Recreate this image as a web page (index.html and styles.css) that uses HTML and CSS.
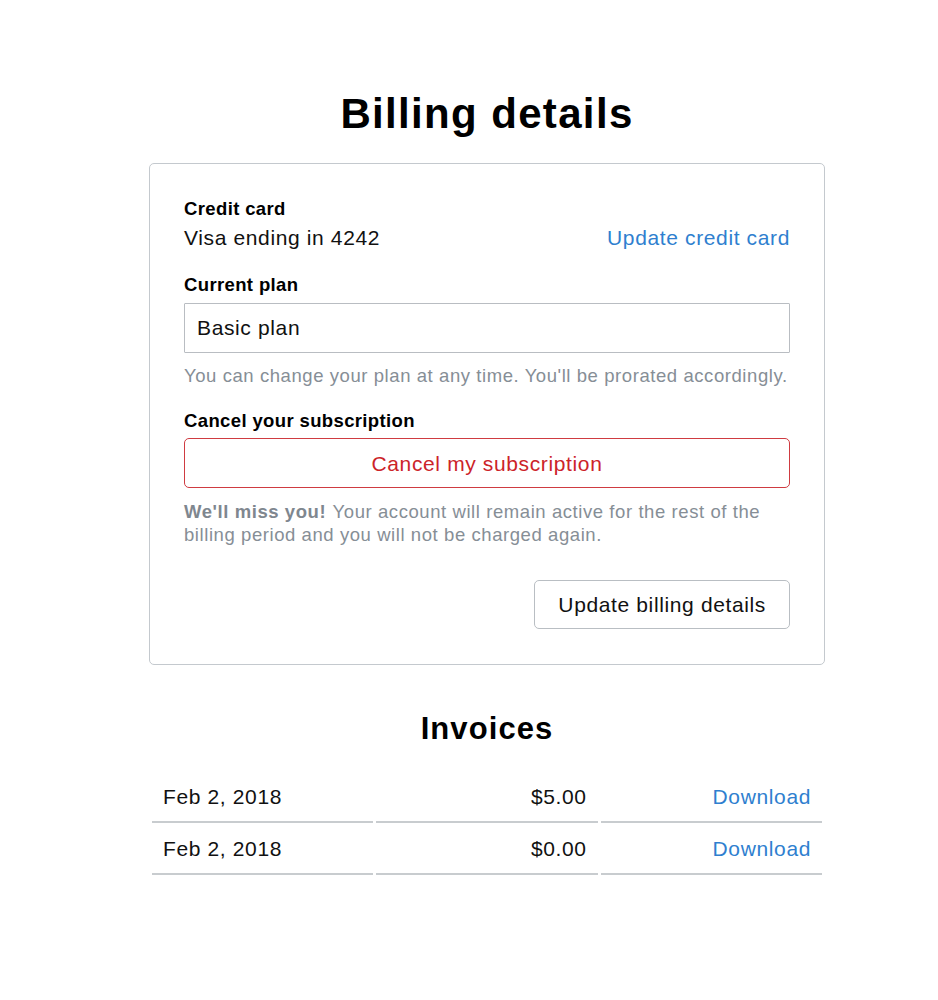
FILE: index.html
```html
<!DOCTYPE html>
<html lang="en">
<head>
<meta charset="utf-8">
<title>Billing details</title>
<link rel="stylesheet" href="styles.css">
</head>
<body>
<main class="page">
  <h1 class="title">Billing details</h1>
  <form class="card">
    <div class="card-row">
      <div>
        <div class="label">Credit card</div>
        <div class="value">Visa ending in 4242</div>
      </div>
      <a class="link" href="#">Update credit card</a>
    </div>

    <div class="field field-plan">
      <label class="label" for="plan">Current plan</label>
      <input class="control" id="plan" type="text" value="Basic plan" readonly>
      <p class="help">You can change your plan at any time. You'll be prorated accordingly.</p>
    </div>

    <div class="field field-cancel">
      <div class="label">Cancel your subscription</div>
      <button class="btn btn-danger" type="button">Cancel my subscription</button>
      <p class="help help-multi"><strong>We'll miss you!</strong> Your account will remain active for the rest of the billing period and you will not be charged again.</p>
    </div>

    <div class="actions">
      <button class="btn btn-default" type="button">Update billing details</button>
    </div>
  </form>

  <h2 class="subtitle">Invoices</h2>
  <table class="invoices">
    <tbody>
      <tr>
        <td>Feb 2, 2018</td>
        <td class="num">$5.00</td>
        <td class="num"><a class="link" href="#">Download</a></td>
      </tr>
      <tr>
        <td>Feb 2, 2018</td>
        <td class="num">$0.00</td>
        <td class="num"><a class="link" href="#">Download</a></td>
      </tr>
    </tbody>
  </table>
</main>
</body>
</html>
```
FILE: styles.css
```css
html, body {
  margin: 0;
  padding: 0;
  background: #ffffff;
}

body {
  font-family: "Liberation Sans", Arial, Helvetica, sans-serif;
  font-size: 21px;
  line-height: 31px;
  letter-spacing: 0.03em;
  color: #111111;
}

.page {
  width: 676px;
  margin-left: 149px;
  padding-top: 90px;
  padding-bottom: 40px;
}

.title {
  margin: 0 0 25px;
  font-size: 42px;
  line-height: 48px;
  font-weight: 700;
  letter-spacing: 0.032em;
  text-align: center;
  color: #000000;
}

.card {
  margin: 0;
  border: 1px solid #c4c9ce;
  border-radius: 5px;
  padding: 31px 34px 35px;
}

.card-row {
  display: flex;
  justify-content: space-between;
  align-items: flex-end;
}

.label {
  display: block;
  font-size: 18.5px;
  line-height: 28px;
  font-weight: 700;
  letter-spacing: 0.02em;
  color: #000000;
}

.value {
  margin-top: -1.5px;
  line-height: 31px;
}

.link {
  color: #2f7fcf;
  text-decoration: none;
  line-height: 31px;
}

.field-plan {
  margin-top: 18.5px;
}

.field-cancel {
  margin-top: 19px;
}

.control {
  display: block;
  box-sizing: border-box;
  width: 100%;
  height: 50px;
  margin: 4px 0 0;
  padding: 0 12px;
  border: 1px solid #b9bdc2;
  border-radius: 1px;
  font: inherit;
  letter-spacing: 0.03em;
  color: #111111;
  background: #ffffff;
  outline: none;
}

.help {
  margin: 10.5px 0 0;
  font-size: 18.5px;
  line-height: 24px;
  letter-spacing: 0.031em;
  color: #868e96;
}

.help strong {
  font-weight: 700;
  margin-right: 1px;
  color: #7f878f;
}

.btn {
  display: block;
  box-sizing: border-box;
  height: 50px;
  margin: 0;
  padding: 0 23px;
  background: #ffffff;
  border-radius: 5px;
  font: inherit;
  letter-spacing: 0.03em;
  cursor: pointer;
}

.btn-danger {
  width: 100%;
  margin-top: 3.5px;
  border: 1px solid #cf3b41;
  color: #cc2329;
}

.field-cancel .help {
  margin-top: 12px;
  line-height: 23px;
}

.actions {
  display: flex;
  justify-content: flex-end;
  margin-top: 34px;
}

.btn-default {
  height: 49px;
  border: 1px solid #b9bec3;
  color: #111111;
}

.subtitle {
  margin: 45px 0 0;
  font-size: 31px;
  line-height: 37px;
  font-weight: 700;
  letter-spacing: 0.035em;
  text-align: center;
  color: #000000;
}

.invoices {
  width: 100%;
  margin-top: 24px;
  border-collapse: separate;
  border-spacing: 3px 0;
  table-layout: fixed;
}

.invoices td {
  padding: 9.5px 11px 9.5px;
  border-bottom: 2px solid #c8cccf;
  line-height: 31px;
}

.invoices td.num {
  text-align: right;
}
```
